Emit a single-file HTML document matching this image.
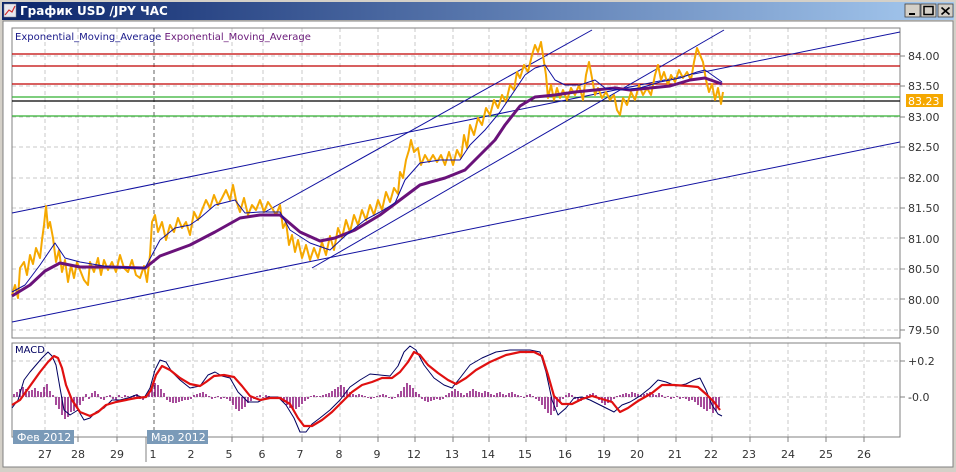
<!DOCTYPE html>
<html><head><meta charset="utf-8"><style>
html,body{margin:0;padding:0;width:956px;height:472px;overflow:hidden;background:#d4d0c8}
svg{display:block}
text{font-family:"DejaVu Sans","Liberation Sans",sans-serif}
</style></head><body>
<svg width="956" height="472" viewBox="0 0 956 472" xmlns="http://www.w3.org/2000/svg">
<defs><linearGradient id="tb" x1="0" x2="1"><stop offset="0" stop-color="#0a246a"/><stop offset="1" stop-color="#a6caf0"/></linearGradient></defs>
<rect x="0" y="0" width="956" height="472" fill="#d4d0c8"/>
<rect x="2" y="2" width="952" height="18" fill="url(#tb)"/>
<rect x="4" y="4" width="12" height="13" fill="#e8e8f0" stroke="#888" stroke-width="0.5"/>
<path d="M5 15 L9 10 L12 12 L15 6" stroke="#d03030" fill="none" stroke-width="1.2"/>
<text x="20" y="15" font-size="12" font-weight="bold" fill="#fff" font-family="Liberation Sans,sans-serif">График USD /JPY  ЧАС</text>
<g>
<rect x="905" y="4" width="15" height="13" fill="#d4d0c8" stroke="#404040" stroke-width="0.8"/>
<rect x="909" y="13" width="6" height="2" fill="#000"/>
<rect x="921" y="4" width="15" height="13" fill="#d4d0c8" stroke="#404040" stroke-width="0.8"/>
<rect x="924" y="6.5" width="9" height="8" fill="none" stroke="#000" stroke-width="1.5"/>
<rect x="938" y="4" width="15" height="13" fill="#d4d0c8" stroke="#404040" stroke-width="0.8"/>
<path d="M941.5 7.5 L949.5 14.5 M949.5 7.5 L941.5 14.5" stroke="#000" stroke-width="1.7"/>
</g>
<rect x="3" y="21" width="950" height="446" fill="#fff" stroke="#808080" stroke-width="1"/>
<g stroke="#c8c8c8" stroke-dasharray="4,3" stroke-width="1">
<path d="M45 28V338M78 28V338M117 28V338M193 28V338M232 28V338M263 28V338M302 28V338M340 28V338M378 28V338M415 28V338M453 28V338M489 28V338M526 28V338M566 28V338M604 28V338M638 28V338M676 28V338M712 28V338M750 28V338M788 28V338M826 28V338M864 28V338"/>
<path d="M45 343V437M78 343V437M117 343V437M193 343V437M232 343V437M263 343V437M302 343V437M340 343V437M378 343V437M415 343V437M453 343V437M489 343V437M526 343V437M566 343V437M604 343V437M638 343V437M676 343V437M712 343V437M750 343V437M788 343V437M826 343V437M864 343V437"/>
<path d="M12 56H900M12 86H900M12 117H900M12 147H900M12 178H900M12 208H900M12 238H900M12 269H900M12 299H900M12 330H900M12 361H900M12 397H900"/>
</g>
<path d="M154 28V437" stroke="#606060" stroke-dasharray="4,3"/>
<rect x="12" y="28" width="888" height="310" fill="none" stroke="#808080"/>
<rect x="12" y="343" width="888" height="94" fill="none" stroke="#808080"/>
<g stroke="#808080"><path d="M900 56h5M900 86h5M900 117h5M900 147h5M900 178h5M900 208h5M900 238h5M900 269h5M900 299h5M900 330h5M900 361h5M900 397h5"/>
<path d="M45 437v5M78 437v5M117 437v5M154 437v5M193 437v5M232 437v5M263 437v5M302 437v5M340 437v5M378 437v5M415 437v5M453 437v5M489 437v5M526 437v5M566 437v5M604 437v5M638 437v5M676 437v5M712 437v5M750 437v5M788 437v5M826 437v5M864 437v5M146 437V462"/></g>
<path d="M12 54H900M12 66H900M12 84H900" stroke="#c00000" stroke-width="1.3"/>
<path d="M12 97H900M12 116H900" stroke="#30b030" stroke-width="1.3"/>
<path d="M12 101H900" stroke="#000" stroke-width="1.3"/>
<g stroke="#1010a0" stroke-width="1" fill="none">
<path d="M12 213L900 32"/>
<path d="M12 322L900 142"/>
<path d="M265 212L592 30"/>
<path d="M312 268L724 30"/>
</g>
<text x="15" y="40" font-size="10" fill="#1a1a8a">Exponential_Moving_Average <tspan fill="#6a1a7a">Exponential_Moving_Average</tspan></text>
<polyline fill="none" stroke="#f5a800" stroke-width="2" stroke-linejoin="round" points="12,295 15,285 18,298 20,268 24,262 27,275 30,255 33,264 36,248 40,258 42,240 44,225 46,206 48,228 50,222 53,238 56,262 59,250 62,272 65,260 68,282 71,265 74,278 77,262 80,270 84,280 88,285 90,262 94,272 98,258 101,275 104,260 108,270 112,262 116,272 120,255 124,268 128,272 132,260 136,275 140,278 144,266 147,282 150,255 152,222 155,215 158,232 162,222 166,240 170,225 174,232 178,218 182,228 186,222 190,235 194,212 198,220 202,210 206,200 210,208 214,195 218,205 222,198 226,190 230,200 233,185 236,200 240,212 244,198 248,215 252,205 256,210 260,200 264,212 268,202 272,208 276,215 280,205 283,228 286,222 289,245 292,235 295,252 298,240 302,258 306,245 310,260 314,248 318,258 322,242 326,255 330,236 334,250 338,228 342,238 346,220 350,232 354,215 358,225 362,210 366,220 370,205 374,215 378,200 382,210 386,192 390,202 394,188 398,194 400,172 403,178 406,160 409,150 411,140 414,152 418,148 421,165 425,155 429,162 433,155 437,162 441,155 445,165 449,152 453,165 457,150 461,158 464,135 467,148 470,125 474,135 478,118 482,125 486,108 490,115 494,100 498,108 502,95 506,102 510,85 514,90 517,72 520,78 524,65 528,72 532,55 535,45 538,52 541,42 544,62 546,75 548,98 551,85 554,100 557,88 560,98 563,90 567,100 571,88 575,95 579,85 583,100 586,75 589,62 592,78 595,95 598,88 602,98 606,92 610,100 614,95 617,110 620,115 623,98 627,105 631,92 635,100 639,85 643,95 647,88 651,95 655,75 658,65 661,80 664,72 668,85 671,75 675,82 679,70 683,78 687,72 691,80 694,62 697,48 700,55 703,62 706,80 709,92 712,84 715,100 718,88 721,104 723,92"/>
<polyline fill="none" stroke="#6a127a" stroke-width="3" stroke-linejoin="round" points="12,296 30,285 45,271 60,263 80,267 110,267 145,268 160,256 190,245 215,232 240,218 260,215 280,215 300,232 320,241 335,238 355,230 380,215 400,200 420,185 445,178 465,170 480,155 495,140 505,125 520,106 535,97 555,95 575,92 595,90 615,88 630,90 650,88 670,86 690,80 705,78 722,84"/>
<polyline fill="none" stroke="#1010a0" stroke-width="1" stroke-linejoin="round" points="12,292 25,285 40,265 55,243 65,258 80,262 110,267 145,268 160,240 175,228 190,225 200,218 215,205 235,200 245,213 260,212 280,212 290,230 310,243 330,250 345,236 365,220 380,212 395,203 405,180 420,163 440,160 460,160 470,145 485,130 500,112 515,90 525,75 535,68 545,65 555,80 565,85 580,85 595,80 605,88 620,90 640,88 660,82 680,78 697,72 705,70 722,82"/>
<g font-size="11" fill="#333">
<text x="908" y="60">84.00</text><text x="908" y="90">83.50</text><text x="908" y="121">83.00</text><text x="908" y="151">82.50</text><text x="908" y="182">82.00</text><text x="908" y="212">81.50</text><text x="908" y="243">81.00</text><text x="908" y="273">80.50</text><text x="908" y="304">80.00</text><text x="908" y="334">79.50</text>
<text x="908" y="365">+0.2</text><text x="908" y="401">-0.0</text>
</g>
<rect x="906" y="94" width="37" height="13" fill="#f5a800"/>
<text x="908" y="105" font-size="11" fill="#fff">83.23</text>
<g stroke="#800070" stroke-width="1.4">
<path d="M14 397v-3M17 397v-5M20 397v-8M23 397v-10M26 397v-8M29 397v-6M32 397v-7M35 397v-9M38 397v-6M41 397v-5M44 397v-10M47 397v-13M50 397v-6M53 397v-2M56 397v8M59 397v12M62 397v18M65 397v22M68 397v20M71 397v15M74 397v14M77 397v10M80 397v8M83 397v4M86 397v-3M89 397v2M92 397v-4M95 397v-6M98 397v-3M101 397v2M104 397v3M107 397v-1M110 397v-2M113 397v2M116 397v3M119 397v-2M122 397v1M125 397v-2M128 397v-1M131 397v2M134 397v-2M137 397v-3M140 397v2M143 397v3M146 397v-2M149 397v-6M152 397v-10M155 397v-14M158 397v-12M161 397v-8M164 397v-4M167 397v3M170 397v5M173 397v6M176 397v6M179 397v5M182 397v4M185 397v3M188 397v3M191 397v2M194 397v-2M197 397v-3M200 397v-4M203 397v-5M206 397v-3M209 397v-1M212 397v2M215 397v1M218 397v-1M221 397v2M224 397v1M227 397v2M230 397v4M233 397v8M236 397v12M239 397v14M242 397v12M245 397v10M248 397v6M251 397v4M254 397v2M257 397v-1M260 397v-2M263 397v1M266 397v-2M269 397v-1M272 397v1M275 397v2M278 397v1M281 397v3M284 397v5M287 397v8M290 397v11M293 397v13M296 397v12M299 397v10M302 397v7M305 397v4M308 397v2M311 397v-1M314 397v-2M317 397v-1M320 397v-1M323 397v-2M326 397v-3M329 397v-4M332 397v-6M335 397v-8M338 397v-10M341 397v-12M344 397v-10M347 397v-7M350 397v-5M353 397v-3M356 397v-2M359 397v-3M362 397v-2M365 397v-1M368 397v1M371 397v2M374 397v1M377 397v-1M380 397v-2M383 397v-3M386 397v-2M389 397v1M392 397v2M395 397v1M398 397v-3M401 397v-6M404 397v-10M407 397v-14M410 397v-12M413 397v-9M416 397v-5M419 397v-3M422 397v2M425 397v4M428 397v5M431 397v4M434 397v3M437 397v2M440 397v3M443 397v2M446 397v-2M449 397v-4M452 397v-6M455 397v-8M458 397v-6M461 397v-4M464 397v-2M467 397v-4M470 397v-6M473 397v-8M476 397v-6M479 397v-5M482 397v-4M485 397v-6M488 397v-5M491 397v-3M494 397v-2M497 397v-4M500 397v-5M503 397v-3M506 397v-2M509 397v-4M512 397v-5M515 397v-3M518 397v-2M521 397v-1M524 397v1M527 397v-2M530 397v-3M533 397v-1M536 397v2M539 397v4M542 397v8M545 397v12M548 397v16M551 397v18M554 397v14M557 397v10M560 397v6M563 397v2M566 397v-2M569 397v-4M572 397v-2M575 397v2M578 397v5M581 397v4M584 397v2M587 397v-2M590 397v-3M593 397v-4M596 397v-2M599 397v3M602 397v6M605 397v8M608 397v6M611 397v4M614 397v2M617 397v-1M620 397v-2M623 397v-3M626 397v-4M629 397v-3M632 397v-5M635 397v-4M638 397v-3M641 397v-2M644 397v-3M647 397v-4M650 397v-5M653 397v-3M656 397v-2M659 397v-4M662 397v-2M665 397v1M668 397v-1M671 397v2M674 397v1M677 397v-1M680 397v2M683 397v1M686 397v2M689 397v4M692 397v3M695 397v5M698 397v8M701 397v10M704 397v12M707 397v14M710 397v12M713 397v16M716 397v14M719 397v10"/>
</g>
<polyline fill="none" stroke="#000060" stroke-width="1" stroke-linejoin="round" points="12,408 18,400 24,380 30,372 36,365 42,358 48,352 52,356 56,365 60,388 64,410 70,415 78,410 84,420 90,418 96,412 104,408 112,400 120,400 128,398 136,395 144,398 150,388 155,370 160,360 166,362 172,372 180,380 190,388 200,386 208,375 215,372 222,376 230,378 238,392 248,402 258,402 268,397 278,397 286,405 294,418 300,432 306,432 312,424 320,418 330,410 340,400 350,387 360,380 370,374 380,375 390,376 398,366 404,352 410,346 416,350 424,365 434,378 444,385 452,388 460,378 470,365 482,358 496,352 510,350 520,350 530,350 540,352 546,372 552,400 558,415 566,408 574,398 582,397 590,400 598,404 606,408 614,412 622,405 630,402 640,396 650,388 658,380 666,382 676,386 686,384 694,380 700,378 706,390 712,405 718,414 722,416"/>
<polyline fill="none" stroke="#e01010" stroke-width="2.2" stroke-linejoin="round" points="12,405 20,400 30,386 40,372 48,362 54,356 58,358 62,368 66,385 72,400 80,412 90,416 98,412 106,405 116,402 126,400 136,398 146,397 151,390 156,375 162,366 170,370 180,378 190,384 200,386 206,382 214,376 224,375 234,377 242,386 250,396 260,400 270,398 280,398 290,404 298,418 304,426 312,426 322,420 332,412 342,402 352,392 362,385 372,382 382,378 392,378 400,372 408,362 414,352 420,355 428,365 438,373 448,380 456,384 466,378 476,370 490,362 506,355 520,352 534,352 542,356 548,375 554,396 562,404 572,404 582,399 592,396 602,399 612,402 620,412 628,408 638,401 652,393 662,385 674,385 688,386 698,387 706,394 714,402 720,410"/>
<text x="15" y="353" font-size="10" fill="#000060">MACD</text>
<rect x="13" y="430" width="61" height="14" fill="#7a9ab8"/>
<text x="17" y="441" font-size="11" fill="#fff">Фев 2012</text>
<rect x="147" y="430" width="61" height="14" fill="#7a9ab8"/>
<text x="151" y="441" font-size="11" fill="#fff">Мар 2012</text>
<g font-size="11" fill="#333" text-anchor="middle">
<text x="45" y="458">27</text><text x="78" y="458">28</text><text x="117" y="458">29</text><text x="153" y="458">1</text><text x="191" y="458">2</text><text x="229" y="458">5</text><text x="262" y="458">6</text><text x="300" y="458">7</text><text x="339" y="458">8</text><text x="377" y="458">9</text><text x="414" y="458">12</text><text x="452" y="458">13</text><text x="488" y="458">14</text><text x="525" y="458">15</text><text x="565" y="458">16</text><text x="604" y="458">19</text><text x="637" y="458">20</text><text x="675" y="458">21</text><text x="711" y="458">22</text><text x="749" y="458">23</text><text x="788" y="458">24</text><text x="826" y="458">25</text><text x="864" y="458">26</text>
</g>
</svg>
</body></html>
